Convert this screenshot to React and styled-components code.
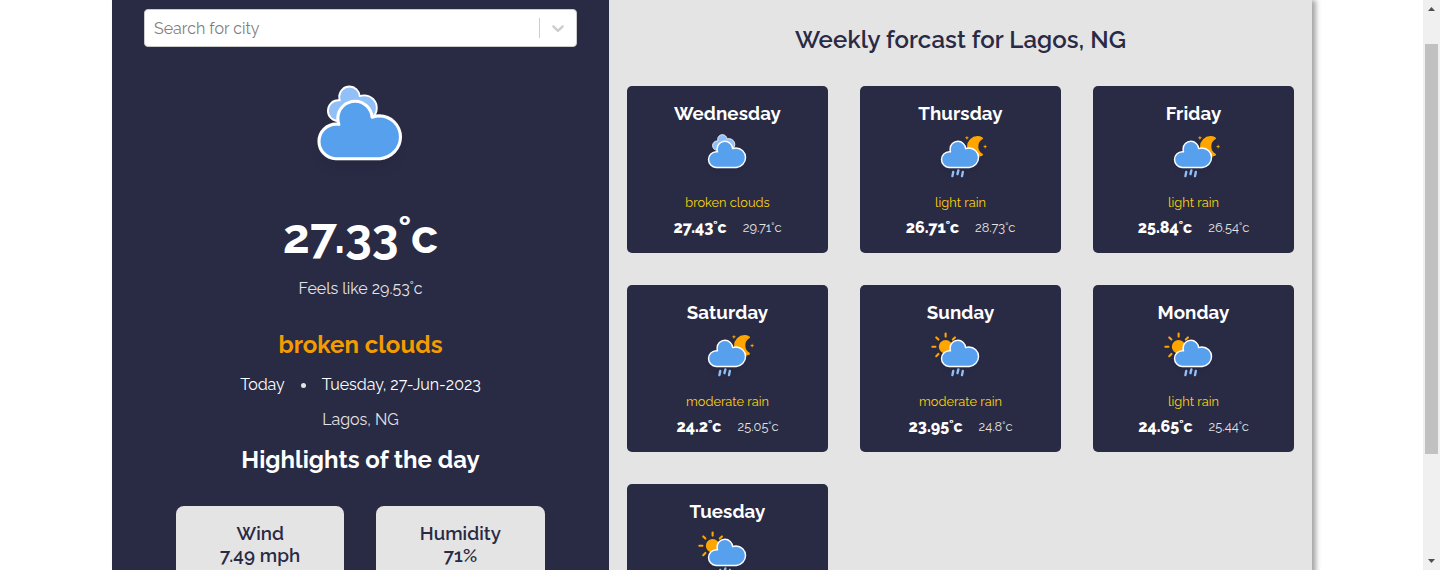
import React from "react";
import styled, { createGlobalStyle } from "styled-components";

const navy = "#292a44";
const mist = "#e4e4e4";

const GlobalStyle = createGlobalStyle`
  * { box-sizing: border-box; }
  body {
    margin: 0;
    overflow: hidden;
    background: #fff;
    font-family: Raleway, Lato, sans-serif;
    font-variant-numeric: oldstyle-nums;
  }
`;

const Page = styled.div`
  display: flex;
  justify-content: space-between;
  height: 570px;
  padding-left: 112px;
  overflow: hidden;
`;

const Shell = styled.main`
  display: flex;
  width: 1200px;
  height: 640px;
  box-shadow: 4px 0 5px 0 rgba(0, 0, 0, 0.35);
`;

const Today = styled.section`
  display: flex;
  flex-direction: column;
  align-items: center;
  width: 497px;
  padding: 9px 32px 0;
  background: ${navy};
`;

const Forecast = styled.section`
  flex: 1;
  padding: 25px 18px 0;
  background: ${mist};
`;

const Text = styled.div`
  height: ${(p) => p.$line}px;
  line-height: ${(p) => p.$line}px;
  margin-top: ${(p) => p.$top || 0}px;
  font-size: ${(p) => p.$size}px;
  font-weight: ${(p) => p.$weight || 400};
  letter-spacing: ${(p) => p.$track || 0}px;
  color: ${(p) => p.$color || "#fff"};
  text-align: center;
  white-space: nowrap;
`;

const Select = styled.div`
  display: flex;
  align-items: center;
  width: 433px;
  height: 38px;
  padding-left: 9px;
  border: 1px solid #ccc;
  border-radius: 4px;
  background: #fff;
`;

const Placeholder = styled.span`
  flex: 1;
  padding-top: 2px;
  font-size: 16px;
  line-height: 20px;
  color: #808080;
`;

const Separator = styled.span`
  width: 1px;
  height: 20px;
  background: #ccc;
`;

const Indicator = styled.span`
  display: flex;
  padding: 8px;
  color: #ccc;
`;

const DateRow = styled.div`
  display: flex;
  align-items: center;
  margin-top: 15px;
`;

const Dot = styled.span`
  width: 5px;
  height: 5px;
  margin: 0 16px;
  border-radius: 50%;
  background: #e4e4e4;
`;

const Highlights = styled.div`
  display: flex;
  gap: 32px;
  width: 368.4px;
  margin: 31px 0.4px 0 0;
`;

const Highlight = styled.div`
  flex: 1;
  height: 100px;
  padding-top: 16px;
  border-radius: 8px;
  background: ${mist};
`;

const Cards = styled.div`
  display: grid;
  grid-template-columns: repeat(3, 201px);
  gap: 32px;
  margin-top: 31px;
`;

const Card = styled.article`
  display: flex;
  flex-direction: column;
  align-items: center;
  height: 167px;
  padding-top: 16px;
  border-radius: 5px;
  background: ${navy};
`;

const Temps = styled.div`
  display: flex;
  align-items: center;
  gap: 16px;
  margin-top: 7px;
`;

const Drawing = styled.svg`
  display: block;
  flex: none;
  width: ${(p) => p.$width}px;
  height: ${(p) => p.$height}px;
  margin-top: ${(p) => p.$top}px;
  overflow: visible;
`;

const Scrollbar = styled.div`
  display: flex;
  flex-direction: column;
  align-items: center;
  justify-content: space-between;
  width: 17px;
  height: 570px;
  padding: 7px 0;
  background: #f0f0f0;
`;

const Thumb = styled.div`
  width: 13px;
  height: 410px;
  margin: 33px 0 auto;
  background: #c1c1c1;
`;

const cloudPath =
  "m47.7 35.4c0-4.6-3.7-8.2-8.2-8.2-1 0-1.9.2-2.8.5-.3-3.4-3.1-6.2-6.6-6.2-3.7 0-6.7 3-6.7 6.7 0 .8.2 1.6.4 2.3-.3-.1-.7-.1-1-.1-3.7 0-6.7 3-6.7 6.7 0 3.6 2.9 6.6 6.5 6.7l17.2 0c4.4-.5 7.9-4 7.9-8.4z";

const Cloud = () => (
  <path d={cloudPath} fill="#57a0ee" stroke="#fff" strokeLinejoin="round" strokeWidth="1.2" />
);

const Rain = () => (
  <g stroke="#91c0f8" strokeWidth="2" strokeLinecap="round">
    <path d="M26.1 47.6l-.7 3.6M30.5 46.3l-.8 3.2M34.3 47.6l-.7 3.6" />
  </g>
);

const Moon = () => (
  <g fill="#ffa500">
    <path
      d="M14.5,13.2c0-3.7,2-6.9,5-8.7c-1.5-.9-3.2-1.3-5-1.3c-5.5,0-10,4.5-10,10s4.5,10,10,10c1.8,0,3.5-.5,5-1.3C16.5,20.2,14.5,16.9,14.5,13.2z"
      transform="translate(35.1 15.3) scale(.8)"
      stroke="#ffa500"
      strokeWidth="2"
      strokeLinejoin="round"
    />
    <path d="M37.8 16.8l.5 1.2 1.3.5-1.3.5-.5 1.3-.5-1.3-1.3-.5 1.3-.5z" />
    <path d="M53.3 24.3l.5 1.2 1.3.5-1.3.5-.5 1.3-.5-1.3-1.3-.5 1.3-.5z" />
  </g>
);

const Sun = () => (
  <g transform="translate(19.6 27)" stroke="#ffa500" strokeWidth="1.8" strokeLinecap="round">
    <circle r="4.9" fill="#ffa500" />
    {[0, 45, 90, 135, 180, 225, 270, 315].map((angle) => (
      <path key={angle} d="M0 8.7V11.3" transform={`rotate(${angle})`} />
    ))}
  </g>
);

const BackCloud = () => (
  <path
    d={cloudPath}
    transform="translate(9.9 2.9) scale(.6)"
    fill="#91c0f8"
    stroke="#fff"
    strokeLinejoin="round"
    strokeWidth="1.2"
  />
);

function WeatherIcon({ kind, width, height, top, box = "0.3 13.6 64 40" }) {
  const Behind = { clouds: BackCloud, night: Moon, day: Sun }[kind];
  const blurId = `soft-${kind}-${width}`;
  return (
    <Drawing viewBox={box} $width={width} $height={height} $top={top}>
      <filter id={blurId} x="-30%" y="-30%" width="160%" height="180%">
        <feDropShadow dx="0" dy="4" stdDeviation="3" floodColor="#000" floodOpacity="0.07" />
      </filter>
      <g filter={`url(#${blurId})`}>
        <Behind />
        <Cloud />
        {kind !== "clouds" && <Rain />}
      </g>
    </Drawing>
  );
}

const days = [
  { name: "Wednesday", kind: "clouds", sky: "broken clouds", temp: "27.43", feels: "29.71" },
  { name: "Thursday", kind: "night", sky: "light rain", temp: "26.71", feels: "28.73" },
  { name: "Friday", kind: "night", sky: "light rain", temp: "25.84", feels: "26.54" },
  { name: "Saturday", kind: "night", sky: "moderate rain", temp: "24.2", feels: "25.05" },
  { name: "Sunday", kind: "day", sky: "moderate rain", temp: "23.95", feels: "24.8" },
  { name: "Monday", kind: "day", sky: "light rain", temp: "24.65", feels: "25.44" },
  { name: "Tuesday", kind: "day" },
];

function DayCard({ name, kind, sky, temp, feels }) {
  return (
    <Card>
      <Text $size={18.72} $line={22} $weight={700} $track={0.1}>{name}</Text>
      <WeatherIcon kind={kind} width={75} height={47} top={8.4} />
      {sky && (
        <>
          <Text $size={12.8} $line={16} $top={15.6} $color="#fcd20c">{sky}</Text>
          <Temps>
            <Text as="span" $size={16} $line={20} $weight={800}>{temp}˚c</Text>
            <Text as="span" $size={12.8} $line={20} $color="#e4e4e4">{feels}˚c</Text>
          </Temps>
        </>
      )}
    </Card>
  );
}

export default function App() {
  return (
    <Page>
      <GlobalStyle />
      <Shell>
        <Today>
          <Select>
            <Placeholder>Search for city</Placeholder>
            <Separator />
            <Indicator>
              <svg width="20" height="20" viewBox="0 0 20 20" fill="currentColor">
                <path d="M4.516 7.548c0.436-0.446 1.043-0.481 1.576 0l3.908 3.747 3.908-3.747c0.533-0.481 1.141-0.446 1.574 0 0.436 0.445 0.408 1.197 0 1.615-0.406 0.418-4.695 4.502-4.695 4.502-0.217 0.223-0.502 0.335-0.787 0.335s-0.57-0.112-0.789-0.335c0 0-4.287-4.084-4.695-4.502s-0.436-1.17 0-1.615z" />
              </svg>
            </Indicator>
          </Select>
          <WeatherIcon kind="clouds" width={165} height={93} top={34} box="0.2 13.7 64 36" />
          <Text $size={48} $line={60} $top={32} $weight={700}>27.33˚c</Text>
          <Text $size={16} $line={20} $top={13} $color="#e4e4e4">Feels like 29.53˚c</Text>
          <Text $size={24} $line={30} $top={31} $weight={700} $color="#f39c00">broken clouds</Text>
          <DateRow>
            <Text $size={16} $line={20}>Today</Text>
            <Dot />
            <Text $size={16} $line={20}>Tuesday, 27-Jun-2023</Text>
          </DateRow>
          <Text $size={16} $line={20} $top={15} $color="#e4e4e4">Lagos, NG</Text>
          <Text $size={24} $line={30} $top={15} $weight={700}>Highlights of the day</Text>
          <Highlights>
            <Highlight>
              <Text $size={18.72} $line={22} $weight={600} $track={0.1} $color={navy}>Wind</Text>
              <Text $size={18.72} $line={22} $weight={600} $track={0.1} $color={navy}>7.49 mph</Text>
            </Highlight>
            <Highlight>
              <Text $size={18.72} $line={22} $weight={600} $track={0.1} $color={navy}>Humidity</Text>
              <Text $size={18.72} $line={22} $weight={600} $track={0.1} $color={navy}>71%</Text>
            </Highlight>
          </Highlights>
        </Today>
        <Forecast>
          <Text $size={24} $line={30} $weight={600} $track={0.1} $color={navy}>Weekly forcast for Lagos, NG</Text>
          <Cards>
            {days.map((day) => (
              <DayCard key={day.name} {...day} />
            ))}
          </Cards>
        </Forecast>
      </Shell>
      <Scrollbar>
        <svg width="7" height="4" viewBox="0 0 7 4"><path d="M0 4L3.5 0 7 4z" fill="#505050" /></svg>
        <Thumb />
        <svg width="7" height="4" viewBox="0 0 7 4"><path d="M0 0L3.5 4 7 0z" fill="#505050" /></svg>
      </Scrollbar>
    </Page>
  );
}
